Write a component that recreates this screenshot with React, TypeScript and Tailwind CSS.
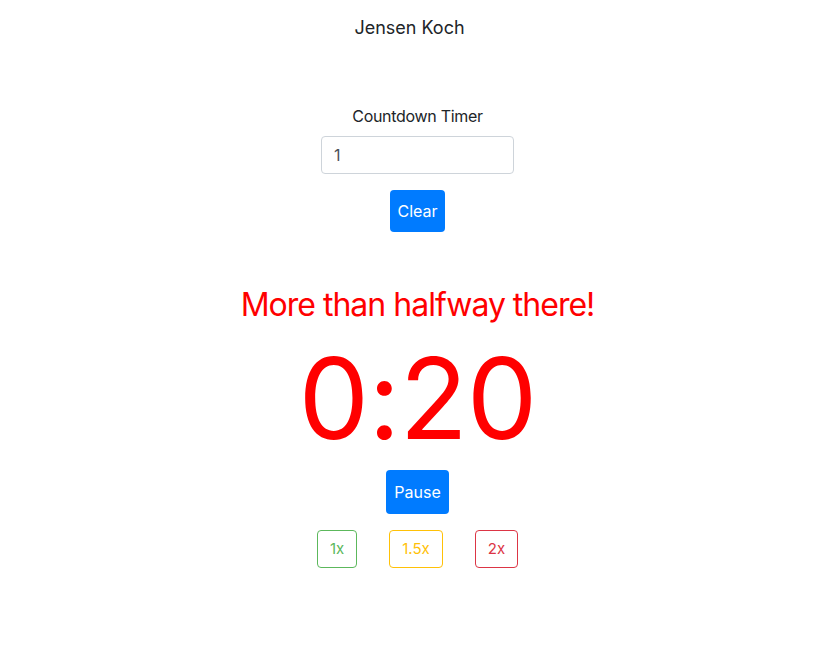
import { useState } from 'react';

const speeds = [
  { label: '1x', cls: 'border-[#5cb85c] text-[#5cb85c]' },
  { label: '1.5x', cls: 'border-[#ffc107] text-[#ffc107]' },
  { label: '2x', cls: 'border-[#dc3545] text-[#dc3545]' },
];

export default function App() {
  const [minutes, setMinutes] = useState('1');

  return (
    <div className="min-h-screen bg-white flex flex-col items-center text-[#212529]"
      style={{ fontFamily: 'Inter, "Noto Sans", sans-serif' }}>
      <h1 className="mt-[16px] mr-[16px] text-[18px] leading-[24px]">Jensen Koch</h1>

      {/* Timer input */}
      <label className="mt-[64px] text-[16px] leading-[24px] tracking-[-0.3px]">Countdown Timer</label>
      <input
        value={minutes}
        onChange={e => setMinutes(e.target.value)}
        className="mt-[8px] w-[193px] h-[38px] px-[12px] text-[16px] text-[#495057] border border-[#ced4da] rounded-[4px] outline-none"
      />
      <button className="mt-[16px] h-[42px] w-[55px] rounded-[4px] bg-[#007bff] text-white text-[16px]">
        Clear
      </button>

      {/* Status */}
      <h2 className="mt-[51px] text-[32px] leading-[44px] tracking-[-1px] text-[#ff0000]">More than halfway there!</h2>
      <div className="mt-[1px] text-[112px] leading-[140px] text-[#ff0000] tracking-[-1px]">0:20</div>

      <button className="mt-[2px] h-[44px] w-[63px] rounded-[4px] bg-[#007bff] text-white text-[16px]">
        Pause
      </button>

      <div className="mt-[16px] flex gap-8">
        {speeds.map(s => (
          <button key={s.label}
            className={`h-[38px] px-[12px] rounded-[4px] border bg-white text-[15px] ${s.cls}`}>
            {s.label}
          </button>
        ))}
      </div>
    </div>
  );
}
